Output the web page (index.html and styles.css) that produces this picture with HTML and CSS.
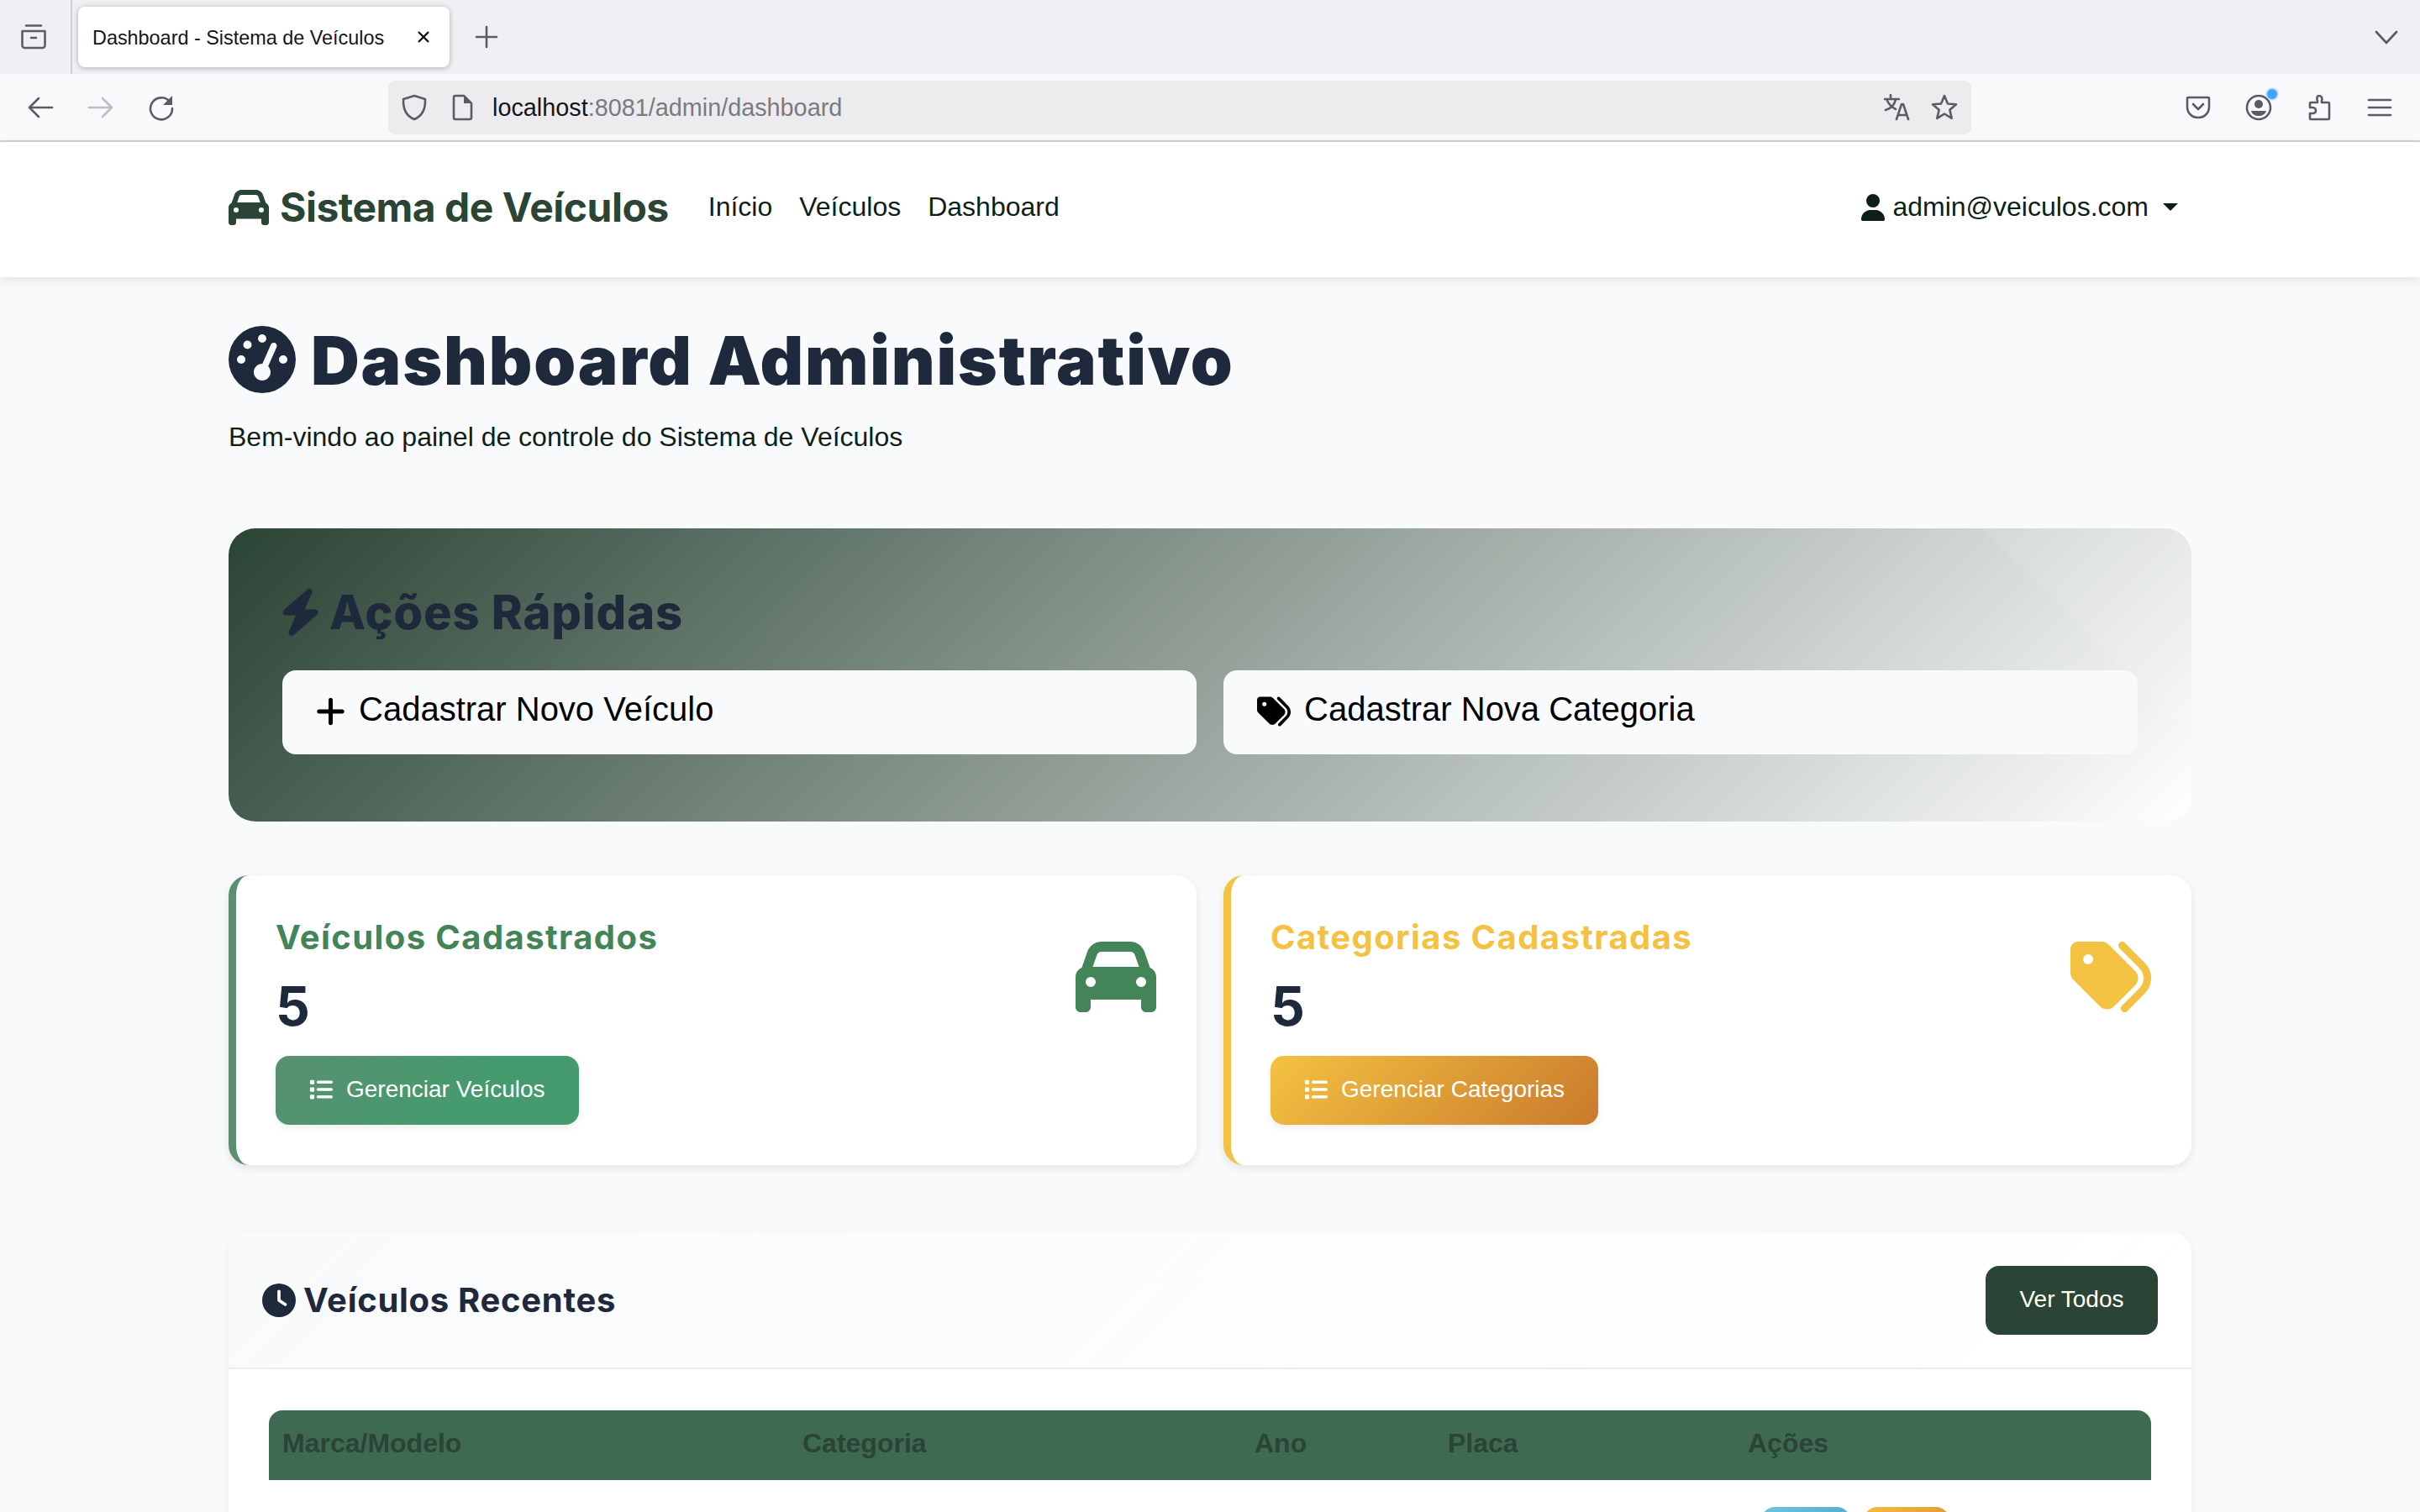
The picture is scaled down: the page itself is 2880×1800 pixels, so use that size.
FILE: index.html
```html
<!DOCTYPE html>
<html lang="pt-BR">
<head>
<meta charset="utf-8">
<title>Dashboard - Sistema de Veículos</title>
<link rel="stylesheet" href="styles.css">
</head>
<body>
<div class="screen">
  <div class="tabstrip">
    <svg class="chrome-icon" viewBox="0 0 32 32"><path d="M7 2.500h18M2.500 9h27v17a3 3 0 0 1-3 3H5.500a3 3 0 0 1-3-3zM13 17h6"/></svg>
    <span class="tab-divider"></span>
    <div class="tab">
      <span class="tab-title">Dashboard - Sistema de Veículos</span>
      <svg class="tab-close" viewBox="0 0 16 16"><path d="M2 2l12 12M14 2L2 14"/></svg>
    </div>
    <svg class="chrome-icon new-tab" viewBox="0 0 32 32"><path d="M16 4v24M4 16h24"/></svg>
    <svg class="chrome-icon tabs-menu" viewBox="0 0 32 32"><path d="M4 10l12 13 12-13"/></svg>
  </div>
  <div class="toolbar">
    <svg class="chrome-icon" viewBox="0 0 32 32"><path d="M30 16H3M14 5L3 16l11 11"/></svg>
    <svg class="chrome-icon faded" viewBox="0 0 32 32"><path d="M2 16h27M18 5l11 11-11 11"/></svg>
    <svg class="chrome-icon" viewBox="0 0 32 32"><path d="M26 9a13 13 0 1 0 3 8"/><path class="solid" d="M29 2v11H18z"/></svg>
    <div class="urlbar">
      <svg class="chrome-icon" viewBox="0 0 32 32"><path d="M16 2l13 4c.5 12-3 20-13 24C6 26 2.500 18 3 6z"/></svg>
      <svg class="chrome-icon doc-icon" viewBox="0 0 32 32"><path d="M6 4a2 2 0 0 1 2-2h10l9 9v17a2 2 0 0 1-2 2H8a2 2 0 0 1-2-2z"/><path class="solid" d="M18 2l9 9h-9z"/></svg>
      <span class="url"><span class="url-host">localhost</span>:8081/admin/dashboard</span>
      <svg class="chrome-icon url-end" viewBox="0 0 32 32"><path d="M1 6h17M8 1v5M14 6c-1 6-5 11-12 13M4 8c2 4 6 8 10 10M15 30l6-18h2l6 18M17 25h10"/></svg>
      <svg class="chrome-icon" viewBox="0 0 32 32"><path d="M16 2l4 9.500 10 .8-7.600 6.500 2.300 10L16 23.500 7.300 28.800l2.300-10L2 12.300l10-.8z"/></svg>
    </div>
    <div class="toolbar-end">
      <svg class="chrome-icon" viewBox="0 0 32 32"><path d="M4 4h24a1 1 0 0 1 1 1v10c0 8-6 13-13 13S3 23 3 15V5a1 1 0 0 1 1-1zM10 12l6 6 6-6"/></svg>
      <span class="account">
        <svg class="chrome-icon" viewBox="0 0 32 32"><circle cx="16" cy="16" r="14"/><circle class="solid" cx="16" cy="12" r="5"/><path class="solid" d="M7 20h18c-1 4-5 6-9 6s-8-2-9-6z"/></svg>
        <span class="account-dot"></span>
      </span>
      <svg class="chrome-icon" viewBox="0 0 32 32"><path d="M16 2c3 0 4 3 3 6v2h8a1 1 0 0 1 1 1v18a1 1 0 0 1-1 1H6a1 1 0 0 1-1-1v-6h3c3 0 4-2 4-3.500S11 16 8 16H5v-5a1 1 0 0 1 1-1h8V8c-1-3-1-6 2-6z"/></svg>
      <svg class="chrome-icon" viewBox="0 0 32 32"><path d="M3 7h26M3 16h26M3 25h26"/></svg>
    </div>
  </div>

  <nav class="navbar">
    <a class="brand">
      <svg class="brand-icon" viewBox="0 0 512 512"><path d="M135.200 117.400L109.100 192H402.900l-26.100-74.600C372.300 104.600 360.200 96 346.600 96H165.400c-13.600 0-25.700 8.600-30.200 21.400zM39.600 196.800L74.800 96.300C88.300 57.800 124.600 32 165.400 32H346.600c40.800 0 77.100 25.800 90.600 64.300l35.200 100.500c23.200 9.600 39.600 32.500 39.600 59.200V400v48c0 17.700-14.300 32-32 32H448c-17.700 0-32-14.300-32-32V400H96v48c0 17.700-14.300 32-32 32H32c-17.700 0-32-14.300-32-32V400 256c0-26.700 16.400-49.600 39.600-59.200zM128 288a32 32 0 1 0 -64 0 32 32 0 1 0 64 0zm288 32a32 32 0 1 0 0-64 32 32 0 1 0 0 64z"/></svg>
      <span>Sistema de Veículos</span>
    </a>
    <div class="nav-links"><a>Início</a><a>Veículos</a><a>Dashboard</a></div>
    <div class="nav-user">
      <svg class="user-icon" viewBox="0 0 448 512"><path d="M224 256A128 128 0 1 0 224 0a128 128 0 1 0 0 256zm-45.700 48C79.800 304 0 383.800 0 482.300C0 498.700 13.300 512 29.700 512H418.300c16.400 0 29.700-13.300 29.700-29.700C448 383.800 368.200 304 269.700 304H178.300z"/></svg>
      <span>admin@veiculos.com</span>
      <span class="caret"></span>
    </div>
  </nav>

  <main class="main">
    <h1 class="page-title">
      <svg class="page-title-icon" viewBox="0 0 512 512"><path d="M0 256a256 256 0 1 1 512 0A256 256 0 1 1 0 256zM288 96a32 32 0 1 0 -64 0 32 32 0 1 0 64 0zM256 416c35.300 0 64-28.700 64-64c0-17.400-6.900-33.100-18.100-44.600L366 161.700c5.300-12.100-.2-26.300-12.300-31.600s-26.300 .2-31.600 12.300L257.900 288c-.6 0-1.300 0-1.900 0c-35.300 0-64 28.700-64 64s28.700 64 64 64zM176 144a32 32 0 1 0 -64 0 32 32 0 1 0 64 0zM96 288a32 32 0 1 0 0-64 32 32 0 1 0 0 64zm352-32a32 32 0 1 0 -64 0 32 32 0 1 0 64 0z"/></svg>
      <span>Dashboard Administrativo</span>
    </h1>
    <p class="page-sub">Bem-vindo ao painel de controle do Sistema de Veículos</p>

    <section class="quick">
      <h2 class="quick-title">
        <svg class="bolt" viewBox="0 0 448 512"><path d="M349.400 44.600c5.900-13.700 1.500-29.700-10.600-38.500s-28.600-8-39.900 1.800l-256 224c-10 8.800-13.600 22.900-8.900 35.300S50.700 288 64 288H175.500L98.600 467.400c-5.900 13.700-1.500 29.700 10.600 38.500s28.600 8 39.900-1.800l256-224c10-8.800 13.600-22.900 8.900-35.300s-16.600-20.700-30-20.700H272.500L349.400 44.600z"/></svg>
        <span>Ações Rápidas</span>
      </h2>
      <div class="quick-grid">
        <a class="quick-btn">
          <svg class="quick-icon plus" viewBox="0 0 448 512"><path d="M256 80c0-17.700-14.300-32-32-32s-32 14.300-32 32V224H48c-17.700 0-32 14.300-32 32s14.300 32 32 32H192V432c0 17.700 14.300 32 32 32s32-14.300 32-32V288H400c17.700 0 32-14.300 32-32s-14.300-32-32-32H256V80z"/></svg>
          <span class="quick-label">Cadastrar Novo Veículo</span>
        </a>
        <a class="quick-btn">
          <svg class="quick-icon tags" viewBox="0 0 512 512"><path d="M345 39.100L472.800 168.400c52.400 53 52.400 138.200 0 191.200L360.800 472.900c-9.300 9.400-24.500 9.500-33.900 .2s-9.500-24.500-.2-33.900L438.600 325.900c33.900-34.300 33.900-89.400 0-123.700L310.900 72.900c-9.300-9.400-9.200-24.600 .2-33.900s24.600-9.200 33.900 .2zM0 229.500V80C0 53.500 21.500 32 48 32H197.500c17 0 33.300 6.700 45.300 18.700l168 168c25 25 25 65.500 0 90.500L277.300 442.700c-25 25-65.500 25-90.500 0l-168-168C6.700 262.700 0 246.500 0 229.500zM144 144a32 32 0 1 0 -64 0 32 32 0 1 0 64 0z"/></svg>
          <span class="quick-label">Cadastrar Nova Categoria</span>
        </a>
      </div>
    </section>

    <section class="stats">
      <article class="stat stat-green">
        <div class="stat-body">
          <h3 class="stat-title">Veículos Cadastrados</h3>
          <div class="stat-num">5</div>
          <a class="stat-btn">
            <svg class="list-icon" viewBox="0 0 512 512"><path d="M40 48C26.700 48 16 58.700 16 72v48c0 13.300 10.700 24 24 24H88c13.300 0 24-10.700 24-24V72c0-13.300-10.700-24-24-24H40zM192 64c-17.700 0-32 14.300-32 32s14.300 32 32 32H480c17.700 0 32-14.300 32-32s-14.300-32-32-32H192zm0 160c-17.700 0-32 14.300-32 32s14.300 32 32 32H480c17.700 0 32-14.300 32-32s-14.300-32-32-32H192zm0 160c-17.700 0-32 14.300-32 32s14.300 32 32 32H480c17.700 0 32-14.300 32-32s-14.300-32-32-32H192zM16 232v48c0 13.300 10.700 24 24 24H88c13.300 0 24-10.700 24-24V232c0-13.300-10.700-24-24-24H40c-13.300 0-24 10.700-24 24zM40 368c-13.300 0-24 10.700-24 24v48c0 13.300 10.700 24 24 24H88c13.300 0 24-10.700 24-24V392c0-13.300-10.700-24-24-24H40z"/></svg>
            <span>Gerenciar Veículos</span>
          </a>
        </div>
        <svg class="stat-icon" viewBox="0 0 512 512"><path d="M135.200 117.400L109.100 192H402.900l-26.100-74.600C372.300 104.600 360.200 96 346.600 96H165.400c-13.600 0-25.700 8.600-30.200 21.400zM39.600 196.800L74.800 96.300C88.300 57.800 124.600 32 165.400 32H346.600c40.800 0 77.100 25.800 90.600 64.300l35.200 100.500c23.200 9.600 39.600 32.500 39.600 59.200V400v48c0 17.700-14.300 32-32 32H448c-17.700 0-32-14.300-32-32V400H96v48c0 17.700-14.300 32-32 32H32c-17.700 0-32-14.300-32-32V400 256c0-26.700 16.400-49.600 39.600-59.200zM128 288a32 32 0 1 0 -64 0 32 32 0 1 0 64 0zm288 32a32 32 0 1 0 0-64 32 32 0 1 0 0 64z"/></svg>
      </article>
      <article class="stat stat-yellow">
        <div class="stat-body">
          <h3 class="stat-title">Categorias Cadastradas</h3>
          <div class="stat-num">5</div>
          <a class="stat-btn">
            <svg class="list-icon" viewBox="0 0 512 512"><path d="M40 48C26.700 48 16 58.700 16 72v48c0 13.300 10.700 24 24 24H88c13.300 0 24-10.700 24-24V72c0-13.300-10.700-24-24-24H40zM192 64c-17.700 0-32 14.300-32 32s14.300 32 32 32H480c17.700 0 32-14.300 32-32s-14.300-32-32-32H192zm0 160c-17.700 0-32 14.300-32 32s14.300 32 32 32H480c17.700 0 32-14.300 32-32s-14.300-32-32-32H192zm0 160c-17.700 0-32 14.300-32 32s14.300 32 32 32H480c17.700 0 32-14.300 32-32s-14.300-32-32-32H192zM16 232v48c0 13.300 10.700 24 24 24H88c13.300 0 24-10.700 24-24V232c0-13.300-10.700-24-24-24H40c-13.300 0-24 10.700-24 24zM40 368c-13.300 0-24 10.700-24 24v48c0 13.300 10.700 24 24 24H88c13.300 0 24-10.700 24-24V392c0-13.300-10.700-24-24-24H40z"/></svg>
            <span>Gerenciar Categorias</span>
          </a>
        </div>
        <svg class="stat-icon" viewBox="0 0 512 512"><path d="M345 39.100L472.800 168.400c52.400 53 52.400 138.200 0 191.200L360.800 472.900c-9.300 9.400-24.500 9.500-33.900 .2s-9.500-24.500-.2-33.900L438.600 325.900c33.900-34.300 33.900-89.400 0-123.700L310.900 72.900c-9.300-9.400-9.200-24.600 .2-33.900s24.600-9.200 33.900 .2zM0 229.500V80C0 53.500 21.500 32 48 32H197.500c17 0 33.300 6.700 45.300 18.700l168 168c25 25 25 65.500 0 90.500L277.300 442.700c-25 25-65.500 25-90.500 0l-168-168C6.700 262.700 0 246.500 0 229.500zM144 144a32 32 0 1 0 -64 0 32 32 0 1 0 64 0z"/></svg>
      </article>
    </section>

    <section class="recent">
      <header class="recent-head">
        <h2 class="recent-title">
          <svg class="clock" viewBox="0 0 512 512"><path d="M256 0a256 256 0 1 1 0 512A256 256 0 1 1 256 0zM232 120V256c0 8 4 15.500 10.700 20l96 64c11 7.400 25.900 4.400 33.300-6.700s4.400-25.900-6.700-33.300L280 243.200V120c0-13.300-10.700-24-24-24s-24 10.700-24 24z"/></svg>
          <span>Veículos Recentes</span>
        </h2>
        <a class="see-all">Ver Todos</a>
      </header>
      <div class="recent-body">
        <table class="vehicles">
          <thead>
            <tr><th class="c1">Marca/Modelo</th><th class="c2">Categoria</th><th class="c3">Ano</th><th class="c4">Placa</th><th class="c5">Ações</th></tr>
          </thead>
          <tbody>
            <tr><td></td><td></td><td></td><td></td><td class="row-actions"><span class="act act-blue"></span><span class="act act-yellow"></span></td></tr>
          </tbody>
        </table>
      </div>
    </section>
  </main>
</div>
</body>
</html>
```
FILE: styles.css
```css
* { box-sizing: border-box; }
html, body { margin: 0; padding: 0; }
body { font-family: "Liberation Sans", Arial, sans-serif; background: #f8fafc; color: #000; }
.screen { height: 100vh; overflow: hidden; display: flex; flex-direction: column; }
h1, h2, h3, p { margin: 0; }

/* browser chrome */
.chrome-icon { width: 32px; height: 32px; flex: none; fill: none; stroke: #5b5b66; stroke-width: 2.6; stroke-linejoin: round; stroke-linecap: round; display: block; }
.chrome-icon .solid { fill: #5b5b66; stroke: none; }
.chrome-icon.faded { stroke: #bdbdc3; }
.tabstrip { height: 88px; flex: none; background: #f0f0f4; display: flex; align-items: center; padding: 0 24px; }
.tab-divider { width: 2px; height: 88px; background: #cfcfd8; margin-left: 28px; margin-right: 7px; }
.tab { width: 442px; height: 72px; background: #fff; border-radius: 8px; box-shadow: 0 1px 6px rgba(0,0,0,.28); display: flex; align-items: center; padding: 0 22px 0 17px; justify-content: space-between; }
.tab-title { font-size: 23.4px; color: #15141a; white-space: nowrap; margin-top: 2px; }
.tab-close { width: 16px; height: 16px; fill: none; stroke: #15141a; stroke-width: 2.4; margin-right: 1px; }
.new-tab { margin-left: 28px; }
.tabs-menu { margin-left: auto; }
.toolbar { height: 81px; flex: none; background: #f9f9fb; border-bottom: 2px solid #cfcfd8; display: flex; align-items: center; padding: 0 32px; gap: 40px; }
.urlbar { width: 1884px; height: 64px; margin-left: 214px; background: #ececee; border-radius: 8px; display: flex; align-items: center; padding: 0 16px 0 15px; gap: 24px; }
.doc-icon { margin-left: 1px; }
.url { font-size: 28.8px; color: #7a7a82; white-space: nowrap; margin-left: -4px; margin-top: 2px; }
.url-host { color: #15141a; }
.url-end { margin-left: auto; }
.toolbar-end { margin-left: auto; display: flex; align-items: center; gap: 40px; }
.account { position: relative; display: block; }
.account-dot { position: absolute; top: -6px; right: -6px; width: 12px; height: 12px; border-radius: 50%; background: #45a1ff; box-shadow: 0 0 0 2px rgba(69,161,255,.25); }

/* navbar */
.navbar { height: 161px; flex: none; background: #fff; display: flex; align-items: center; padding: 0 288px 6px 272px; box-shadow: 0 4px 12px rgba(0,0,0,.09); position: relative; }
.brand { display: flex; align-items: center; gap: 13px; color: #2a4435; font-family: Inter, "Liberation Sans", sans-serif; font-weight: 700; font-size: 48px; letter-spacing: -.5px; white-space: nowrap; }
.brand-icon { width: 48px; height: 48px; fill: #2a4435; }
.nav-links { display: flex; gap: 32px; margin-left: 47px; font-size: 32px; color: #0d1f17; }
.nav-user { margin-left: auto; display: flex; align-items: center; font-size: 32px; color: #0d1f17; white-space: nowrap; }
.user-icon { width: 28px; height: 32px; fill: #0d1f17; margin-right: 9px; }
.caret { width: 0; height: 0; border-left: 9px solid transparent; border-right: 9px solid transparent; border-top: 9px solid #0d1f17; margin-left: 17px; }

/* main */
.main { width: 2336px; margin: 0 auto; padding-top: 48px; }
.page-title { display: flex; align-items: center; gap: 18px; height: 100px; font-family: Inter, "Liberation Sans", sans-serif; font-weight: 900; font-size: 80px; color: #1e293b; letter-spacing: 1.8px; white-space: nowrap; }
.page-title-icon { width: 80px; height: 80px; fill: #1e293b; flex: none; }
.page-sub { margin-top: 18px; font-size: 32px; line-height: 48px; color: #0d1f17; }

.quick { margin-top: 85px; height: 349px; border-radius: 32px; padding: 60px 64px 80px; background: linear-gradient(135deg, #2a4435 0%, #ffffff 100%); position: relative; overflow: hidden; }
.quick::before { content: ""; position: absolute; inset: 0; background: rgba(255,255,255,.1); clip-path: polygon(2088px 0, 100% 0, 100% 248px); }
.quick-title { position: relative; display: flex; align-items: center; gap: 10px; height: 80px; margin-bottom: 29px; font-family: Inter, "Liberation Sans", sans-serif; font-weight: 800; font-size: 56px; letter-spacing: .9px; color: #1e293b; white-space: nowrap; }
.bolt { width: 49px; height: 56px; fill: #1e293b; flex: none; margin-left: -3px; }
.quick-grid { position: relative; display: grid; grid-template-columns: 1fr 1fr; gap: 32px; }
.quick-btn { height: 100px; background: #f8fafc; border-radius: 16px; display: flex; align-items: center; padding: 0 0 2px 40px; font-size: 40px; color: #000; white-space: nowrap; gap: 16px; }
.quick-label { margin-bottom: 5px; }
.quick-icon { width: 35px; height: 40px; fill: #000; flex: none; }
.quick-icon.tags { width: 40px; }

.stats { margin-top: 64px; display: grid; grid-template-columns: 1fr 1fr; gap: 32px; }
.stat { height: 345px; background: #fff; border-radius: 24px; border-left: 9px solid; padding: 44px 48px 0 47px; display: flex; justify-content: space-between; align-items: flex-start; box-shadow: 0 4px 12px rgba(0,0,0,.09); }
.stat-green { border-left-color: #5a9070; }
.stat-yellow { border-left-color: #f4c242; }
.stat-title { font-family: Inter, "Liberation Sans", sans-serif; font-weight: 700; font-size: 40px; letter-spacing: 1.4px; line-height: 60px; white-space: nowrap; }
.stat-green .stat-title, .stat-green .stat-icon { color: #438558; fill: #438558; }
.stat-yellow .stat-title, .stat-yellow .stat-icon { color: #f4c242; fill: #f4c242; }
.stat-num { margin-top: 12px; font-family: Inter, "Liberation Sans", sans-serif; font-weight: 700; font-size: 64px; line-height: 80px; color: #1e293b; }
.stat-btn { margin-top: 19px; height: 82px; border-radius: 16px; display: inline-flex; align-items: center; padding: 0 40px 3px; gap: 16px; font-size: 28px; color: #fff; white-space: nowrap; box-shadow: 0 3px 8px rgba(0,0,0,.08); }
.stat-green .stat-btn { background: linear-gradient(135deg, #5a9070 0%, #459a6e 60%); }
.stat-yellow .stat-btn { background: linear-gradient(135deg, #f4c242 0%, #c97a2c 100%); }
.list-icon { width: 28px; height: 28px; fill: #fff; flex: none; }
.stat-icon { width: 96px; height: 96px; flex: none; margin-top: 29px; }

.recent { margin-top: 80px; background: #fff; border-radius: 24px; box-shadow: 0 4px 12px rgba(0,0,0,.06); overflow: hidden; height: 600px; }
.recent-head { height: 163px; border-bottom: 2px solid #e9edf1; display: flex; align-items: center; justify-content: space-between; padding: 0 40px; background: linear-gradient(135deg, #f8fafc 0%, #ffffff 100%); }
.recent-title { display: flex; align-items: center; gap: 9px; font-family: Inter, "Liberation Sans", sans-serif; font-weight: 700; font-size: 40px; letter-spacing: .7px; color: #1e293b; white-space: nowrap; }
.clock { width: 40px; height: 40px; fill: #1e293b; flex: none; }
.see-all { width: 205px; height: 82px; background: #2a4435; color: #fff; border-radius: 16px; font-size: 28px; display: flex; align-items: center; justify-content: center; padding-bottom: 2px; }
.recent-body { padding: 49px 48px 0; }
.vehicles { width: 2240px; border-collapse: separate; border-spacing: 0; table-layout: fixed; }
.vehicles th { height: 83px; background: #3f6a52; color: #2a4435; font-size: 32px; font-weight: 700; text-align: left; padding: 0 16px 5px; white-space: nowrap; }
.vehicles th.c1 { width: 619px; border-top-left-radius: 16px; }
.vehicles th.c2 { width: 538px; }
.vehicles th.c3 { width: 230px; }
.vehicles th.c4 { width: 357px; }
.vehicles th.c5 { width: 496px; border-top-right-radius: 16px; }
.row-actions { padding: 32px 0 0 32px; display: flex; gap: 16px; }
.act { display: block; height: 70px; border-radius: 16px; }
.act-blue { width: 106px; background: linear-gradient(135deg, #6ec6e0, #4a9fc0); }
.act-yellow { width: 102px; background: linear-gradient(135deg, #f4bd42, #d98a30); }
```
